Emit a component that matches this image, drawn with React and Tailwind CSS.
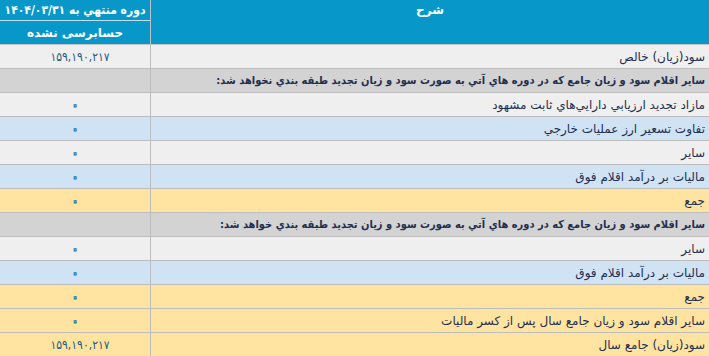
import React from "react";

const rows = [
  { t: "سود(زيان) خالص", v: "۱۵۹,۱۹۰,۲۱۷", c: "bg-[#efefef]" },
  { t: "ساير اقلام سود و زيان جامع که در دوره هاي آتي به صورت سود و زيان تجديد طبقه بندي نخواهد شد:", v: "", c: "bg-[#d3d3d3]", b: true },
  { t: "مازاد تجديد ارزيابي دارايي‌هاي ثابت مشهود", v: "۰", c: "bg-[#efefef]" },
  { t: "تفاوت تسعير ارز عمليات خارجي", v: "۰", c: "bg-[#d0e3f5]" },
  { t: "ساير", v: "۰", c: "bg-[#efefef]" },
  { t: "ماليات بر درآمد اقلام فوق", v: "۰", c: "bg-[#d0e3f5]" },
  { t: "جمع", v: "۰", c: "bg-[#fee3a1]" },
  { t: "ساير اقلام سود و زيان جامع که در دوره هاي آتي به صورت سود و زيان تجديد طبقه بندي خواهد شد:", v: "", c: "bg-[#d3d3d3]", b: true },
  { t: "ساير", v: "۰", c: "bg-[#efefef]" },
  { t: "ماليات بر درآمد اقلام فوق", v: "۰", c: "bg-[#d0e3f5]" },
  { t: "جمع", v: "۰", c: "bg-[#fee3a1]" },
  { t: "ساير اقلام سود و زيان جامع سال پس از کسر ماليات", v: "۰", c: "bg-[#fee3a1]" },
  { t: "سود(زيان) جامع سال", v: "۱۵۹,۱۹۰,۲۱۷", c: "bg-[#fee3a1]" },
];

export default function App() {
  return (
    <div
      dir="rtl"
      className="w-[709px] h-[356px] overflow-hidden bg-white text-[12px] leading-none text-[#1f2f4f]"
      style={{ fontFamily: '"DejaVu Sans", sans-serif' }}
    >
      <div className="flex h-[45px] bg-[#0798c9] text-white font-bold border-b border-[#c4c4c4]">
        <div className="w-[559px] border-l border-[#b8c4ca] flex justify-center pt-[4px]">شرح</div>
        <div className="w-[150px] flex flex-col">
          <div className="h-[21px] border-b border-[#bfe0ee] flex items-center justify-center whitespace-nowrap [font-stretch:condensed] text-[12px]">
            دوره منتهي به ۱۴۰۴/۰۳/۳۱
          </div>
          <div className="flex-1 flex items-center justify-center">حسابرسی نشده</div>
        </div>
      </div>
      {rows.map((r, i) => (
        <div key={i} className={`flex h-[24px] border-b border-[#bdbdbd] ${r.c}`}>
          <div
            className={`w-[559px] border-l border-[#bdbdbd] flex items-center pr-[4px] whitespace-nowrap ${
              r.b ? "font-bold [font-stretch:condensed] text-[11px]" : ""
            }`}
          >
            {r.t}
          </div>
          <div className="w-[150px] flex items-center justify-center text-[#1d5b82]">
            {r.v === "۰" ? (
              <span className="text-[18px] text-transparent [-webkit-text-stroke:1px_#2272aa]">{r.v}</span>
            ) : (
              <span dir="ltr" className="inline-block text-[12px] [font-stretch:condensed] pl-[10px]">
                {r.v}
              </span>
            )}
          </div>
        </div>
      ))}
    </div>
  );
}
